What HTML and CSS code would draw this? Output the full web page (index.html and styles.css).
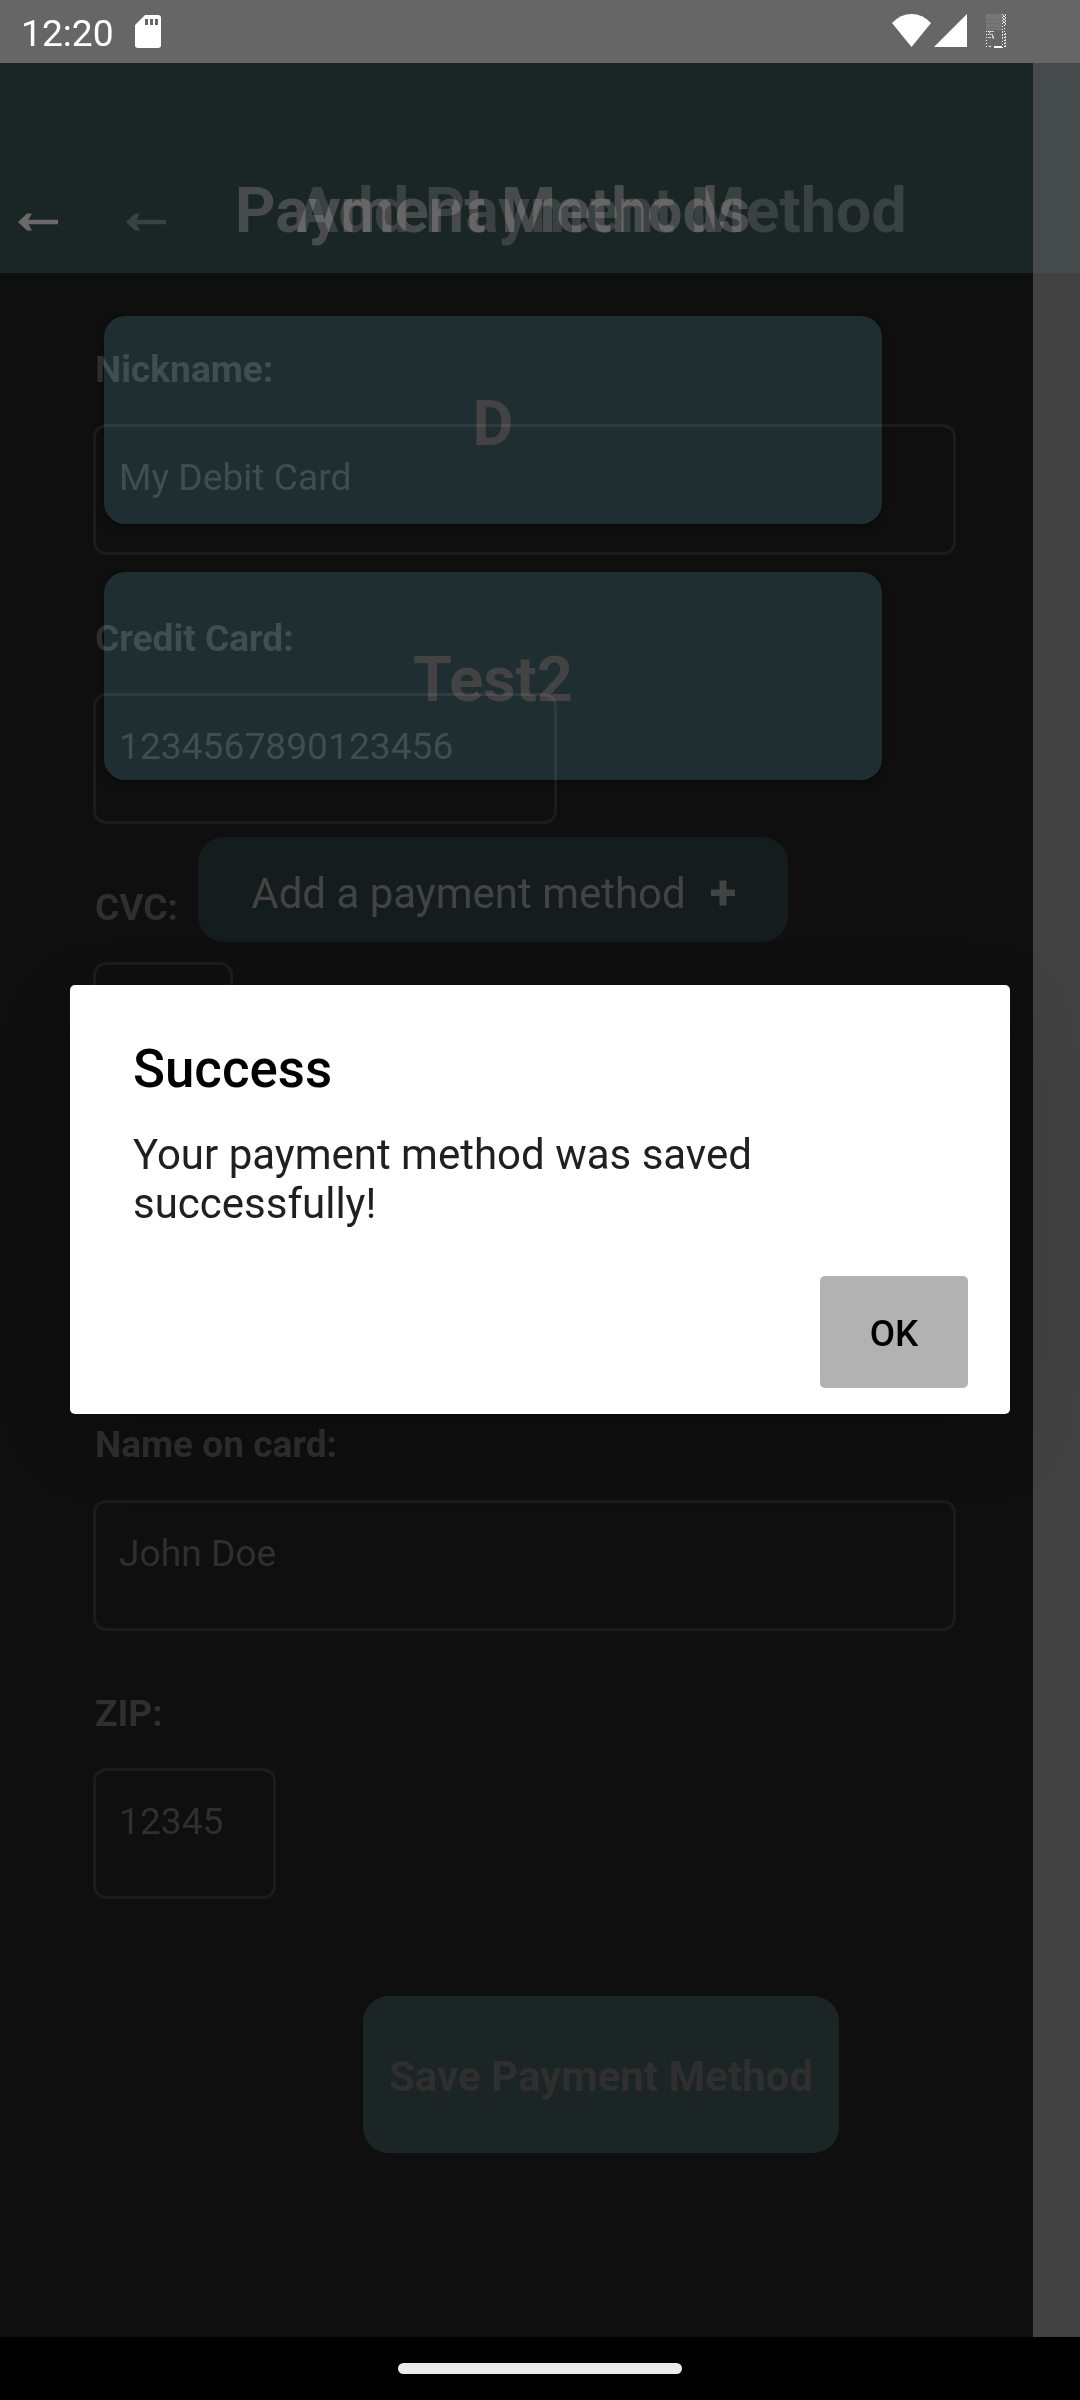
FILE: index.html
```html
<!DOCTYPE html>
<html lang="en">
<head>
<meta charset="utf-8">
<title>Payment Methods</title>
<link rel="stylesheet" href="styles.css">
</head>
<body>
<div class="phone">
  <div class="status">
    <span class="clock">12:20</span>
    <svg class="sd" width="26" height="33" viewBox="0 0 26 33"><path fill="#fff" fill-rule="evenodd" d="M10 0H23Q26 0 26 3V30Q26 33 23 33H3Q0 33 0 30V10ZM10 4V10H13V4ZM15 4V10H18V4ZM20 4V10H23V4Z"/></svg>
    <svg class="wifi" width="39" height="33" viewBox="0 0 39 33"><path fill="#fff" d="M0 9Q8.500 0 19.500 0T39 9L19.500 33Z"/></svg>
    <svg class="signal" width="33" height="33" viewBox="0 0 33 33"><path fill="#fff" d="M33 0V33H0Z"/></svg>
    <svg class="battery" width="20" height="34" viewBox="0 0 20 34" shape-rendering="crispEdges">
      <path fill="#777" d="M0 0H16V16H0Z"/>
      <path stroke="#6e6e6e" d="M0 5.500H16M0 9.500H16M0 13.500H16M4.500 0V16"/>
      <path stroke="#fff" stroke-dasharray="1 2" d="M16.500 0V34M18.500 2V33M0.500 17V34M2.500 17V25"/>
      <path stroke="#ddd" stroke-dasharray="2 1" d="M17.500 1V10M19.500 0V12M19.500 19V33M16.500 17V25"/>
      <path stroke="#ccc" fill="none" d="M3 17.500H8M3.500 17V20M4 20.500H7M6.500 20V24M7.500 22V25M2 23.500H5"/>
      <path fill="#fff" d="M8 32H16V34H8ZM3 32H5V33H3Z"/>
    </svg>
  </div>

  <div class="stage">
    <section class="screen list-screen">
      <header class="bar">
        <svg class="arrow" width="40" height="18" viewBox="0 0 40 18"><path d="M0 9L9 .5H14L10.500 6.700H40V11.300H10.500L14 17.500H9Z"/></svg>
        <h1 class="title">Payment Methods</h1>
      </header>
      <div class="cards">
        <div class="card">D</div>
        <div class="card">Test2</div>
        <div class="add">
          <span>Add a payment method</span>
          <svg class="plus" width="24" height="26" viewBox="0 0 24 26"><path d="M8.500 .5H15.500V9.500H24V16H15.500V25.500H8.500V16H0V9.500H8.500Z"/></svg>
        </div>
      </div>
    </section>

    <div class="edge"><div class="edge-top"></div></div>

    <section class="screen form-screen">
      <header class="bar">
        <svg class="arrow" width="40" height="18" viewBox="0 0 40 18"><path d="M0 9L9 .5H14L10.500 6.700H40V11.300H10.500L14 17.500H9Z"/></svg>
        <h1 class="title">Add Payment Method</h1>
      </header>
      <div class="form">
        <div class="field"><div class="label">Nickname:</div><div class="input wide">My Debit Card</div></div>
        <div class="field"><div class="label">Credit Card:</div><div class="input number">1234567890123456</div></div>
        <div class="field"><div class="label">CVC:</div><div class="input cvc"></div></div>
        <div class="field"></div>
        <div class="field"><div class="label">Name on card:</div><div class="input wide">John Doe</div></div>
        <div class="field"><div class="label">ZIP:</div><div class="input zip">12345</div></div>
      </div>
      <div class="save">Save Payment Method</div>
    </section>

    <div class="overlay">
      <div class="dialog">
        <h2 class="dialog-title">Success</h2>
        <p class="dialog-text">Your payment method was saved successfully!</p>
        <button class="ok">OK</button>
      </div>
    </div>
  </div>

  <div class="nav"><div class="pill"></div></div>
</div>
</body>
</html>
```
FILE: styles.css
```css
* { box-sizing: border-box; }
body { margin: 0; background: #000; font-family: Roboto, "Liberation Sans", sans-serif; }
h1, h2, p { margin: 0; }
.phone { width: 1080px; height: 2400px; display: flex; flex-direction: column; overflow: hidden; }

.status { height: 63px; background: #666; display: flex; align-items: flex-start; padding: 14px 74px 0 21px; }
.clock { color: #fff; font-size: 37.2px; line-height: 43px; margin-top: -2px; width: 114px; }
.sd { margin-top: 1px; }
.wifi { margin-left: auto; margin-right: 3px; }
.signal { margin-right: 19px; }

.stage { height: 2274px; display: grid; grid-template: 2274px / 1033px 47px; background: #0f0f0f; }
.screen { grid-area: 1 / 1 / 2 / 2; }
.bar { height: 210px; display: flex; align-items: flex-start; padding-top: 111px; }
.arrow { flex: none; margin-top: 39px; }
.title { font-size: 63px; line-height: 74px; font-weight: 700; white-space: nowrap; }

.list-screen .bar { background: #1a2626; padding-left: 18px; gap: 177px; }
.list-screen .arrow { fill: #6b6868; }
.list-screen .title { color: #484b4b; }
.cards { padding: 43px 0 0 104px; width: 882px; display: flex; flex-direction: column; align-items: center; }
.card { width: 778px; height: 208px; margin-bottom: 48px; padding-top: 7px; border-radius: 21px; background: #1e2e31; color: #434343; font-size: 63px; font-weight: 700; display: flex; align-items: center; justify-content: center; box-shadow: 0 3px 8px rgba(0, 0, 0, .4); }
.add { width: 590px; height: 105px; margin-top: 9px; border-radius: 26px; background: #141c1d; color: #434343; font-size: 42px; display: flex; align-items: center; justify-content: center; gap: 25px; padding-top: 7px; }
.add span { line-height: 49px; }
.plus { fill: #434343; }

.edge { grid-area: 1 / 2 / 2 / 3; background: #424242; }
.edge-top { height: 210px; background: #454a4a; }

/* The entering screen glows through the leaving one during the transition */
.form-screen { mix-blend-mode: plus-lighter; color: #202020; }
.form-screen .bar { padding-left: 126px; gap: 130px; }
.form-screen .arrow { fill: #1f1b1b; }
.form-screen .title { color: #1f1b1b; letter-spacing: -0.06px; }
.form { padding: 75px 76px 0 93px; }
.field { height: 268.8px; }
.label { padding-left: 2px; margin-bottom: 33.4px; font-size: 37.1px; line-height: 43px; font-weight: 700; }
.input { height: 131px; padding: 29px 0 0 23px; border: 3px solid #0d0d0d; border-radius: 13px; font-size: 37.2px; line-height: 43px; }
.wide { width: 863px; }
.number { width: 464px; }
.cvc { width: 140px; }
.zip { width: 183px; }
.save { width: 476px; height: 157px; margin: 35px 0 0 363px; padding-top: 5px; border-radius: 26px; background: #0c1617; font-size: 42px; font-weight: 700; display: flex; align-items: center; justify-content: center; }

.overlay { grid-area: 1 / 1 / 2 / 3; z-index: 1; display: flex; align-items: flex-start; justify-content: center; padding-top: 922px; }
.dialog { width: 940px; height: 429px; background: #fff; border-radius: 5px; padding: 53px 42px 26px 63px; display: flex; flex-direction: column; box-shadow: 0 24px 72px rgba(0, 0, 0, .2); }
.dialog-title { font-size: 52.8px; line-height: 62px; font-weight: 500; color: #000; }
.dialog-text { margin-top: 30px; width: 700px; font-size: 42px; line-height: 49px; color: #202020; }
.ok { margin: auto 0 0 auto; width: 148px; height: 112px; padding: 2px 0 0; border: 0; border-radius: 5px; background: #b2b2b2; color: #000; font: 500 36.75px/43px Roboto, "Liberation Sans", sans-serif; }

.nav { height: 63px; background: #000; display: flex; justify-content: center; align-items: flex-start; padding-top: 26px; }
.pill { width: 284px; height: 11px; border-radius: 6px; background: #ebebeb; }
```
